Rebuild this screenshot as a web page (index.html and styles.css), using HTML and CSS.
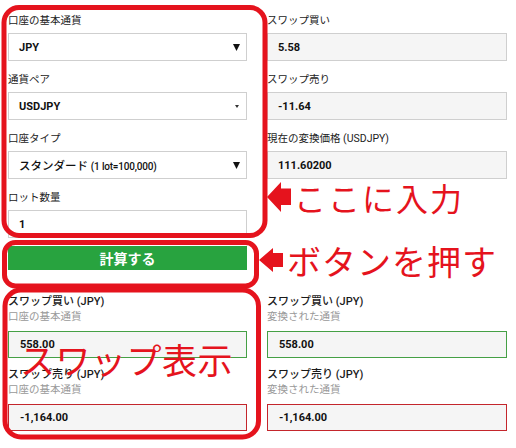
FILE: index.html
```html
<!DOCTYPE html>
<html lang="ja">
<head>
<meta charset="utf-8">
<title>スワップ計算</title>
<link rel="stylesheet" href="styles.css">
</head>
<body>
<div class="page">
  <div class="grid">
    <div class="col">
      <div class="field">
        <div class="label">口座の基本通貨</div>
        <div class="box select"><span>JPY</span><svg class="caret" width="7" height="7" viewBox="0 0 7 7"><polygon points="0,0 7,0 3.5,7" fill="#111"/></svg></div>
      </div>
      <div class="field">
        <div class="label">通貨ペア</div>
        <div class="box select"><span>USDJPY</span><svg class="caret small" width="4" height="3" viewBox="0 0 4 3"><polygon points="0,0 4,0 2,3" fill="#333"/></svg></div>
      </div>
      <div class="field">
        <div class="label">口座タイプ</div>
        <div class="box select"><span class="opt">スタンダード <span class="lat">(1 lot=100,000)</span></span><svg class="caret" width="7" height="7" viewBox="0 0 7 7"><polygon points="0,0 7,0 3.5,7" fill="#111"/></svg></div>
      </div>
      <div class="field last">
        <div class="label">ロット数量</div>
        <div class="box">1</div>
      </div>
      <div class="btn">計算する</div>
    </div>
    <div class="col">
      <div class="field">
        <div class="label">スワップ買い</div>
        <div class="box ro">5.58</div>
      </div>
      <div class="field">
        <div class="label">スワップ売り</div>
        <div class="box ro">-11.64</div>
      </div>
      <div class="field">
        <div class="label">現在の変換価格 (USDJPY)</div>
        <div class="box ro">111.60200</div>
      </div>
    </div>
  </div>

  <div class="grid results">
    <div class="col">
      <div class="rfield">
        <div class="rlabel">スワップ買い (JPY)</div>
        <div class="sub">口座の基本通貨</div>
        <div class="box ro res green">558.00</div>
      </div>
      <div class="rfield">
        <div class="rlabel">スワップ売り (JPY)</div>
        <div class="sub">口座の基本通貨</div>
        <div class="box ro res red">-1,164.00</div>
      </div>
    </div>
    <div class="col">
      <div class="rfield">
        <div class="rlabel">スワップ買い (JPY)</div>
        <div class="sub">変換された通貨</div>
        <div class="box ro res green">558.00</div>
      </div>
      <div class="rfield">
        <div class="rlabel">スワップ売り (JPY)</div>
        <div class="sub">変換された通貨</div>
        <div class="box ro res red">-1,164.00</div>
      </div>
    </div>
  </div>

  <svg class="overlay" width="516" height="448" viewBox="0 0 516 448">
    <g fill="none" stroke="#e5131d" stroke-width="5">
      <rect x="4" y="7.5" width="261" height="228" rx="15"/>
      <rect x="4.5" y="242.5" width="252" height="43.5" rx="11"/>
      <rect x="5" y="290" width="253.5" height="147" rx="16"/>
    </g>
    <g fill="#e5131d">
      <polygon points="267,197 281,182 281,188.5 291,188.5 291,205 281,205 281,212"/>
      <polygon points="259,260 273,248 273,253 283,253 283,267 273,267 273,272"/>
    </g>
  </svg>
  <div class="note n1">ここに入力</div>
  <div class="note n2">ボタンを押す</div>
  <div class="note n3">スワップ表示</div>
</div>
</body>
</html>
```

FILE: styles.css
```css
* { box-sizing: border-box; }
html, body { margin: 0; padding: 0; background: #fff; }
body {
  font-family: Roboto, "Noto Sans CJK JP", sans-serif;
  color: #222;
}
.page {
  position: relative;
  width: 516px;
  height: 448px;
  padding: 14px 9px 0 8px;
  overflow: hidden;
}
.grid {
  display: grid;
  grid-template-columns: 239px 240px;
  column-gap: 20px;
}
.col { display: flex; flex-direction: column; }
.field { margin-bottom: 12px; }
.field.last { margin-bottom: 8px; }
.label {
  font-size: 10.5px;
  line-height: 14px;
  height: 14px;
  margin-bottom: 5px;
  color: #222;
  white-space: nowrap;
}
.box {
  height: 28px;
  border: 1px solid #cfcfcf;
  background: #fff;
  padding: 0 10px;
  display: flex;
  align-items: center;
  font-size: 11px;
  font-weight: 700;
  color: #111;
  white-space: nowrap;
}
.select { justify-content: space-between; padding-right: 6px; }
.caret.small { margin-right: 1px; }
.opt { font-weight: 500; font-size: 11.5px; }
.opt .lat { font-size: 10px; letter-spacing: -0.2px; }
.ro { background: #f5f5f5; }
.btn {
  height: 24px;
  background: #28a33f;
  color: #fff;
  font-weight: 700;
  font-size: 14px;
  display: flex;
  align-items: center;
  justify-content: center;
}
.results { margin-top: 25px; }
.rfield { margin-bottom: 10px; }
.rlabel {
  font-size: 11px;
  line-height: 14px;
  height: 14px;
  color: #1a1a1a;
  font-weight: 500;
  white-space: nowrap;
}
.sub {
  font-size: 10.5px;
  line-height: 14px;
  height: 14px;
  margin: 1px 0 7px;
  color: #999;
  white-space: nowrap;
}
.res { height: 27px; padding-left: 11px; }
.green { border-color: #45a045; }
.red { border-color: #c4262c; }

.overlay {
  position: absolute;
  left: 0;
  top: 0;
  pointer-events: none;
}
.note {
  position: absolute;
  font-family: "Noto Sans CJK JP", sans-serif;
  color: #e5131d;
  line-height: 1;
  white-space: nowrap;
}
.n1 { left: 294px; top: 181px; font-size: 32px; letter-spacing: 2px; }
.n2 { left: 287px; top: 244px; font-size: 34px; letter-spacing: 1px; }
.n3 { left: 20px; top: 341px; font-size: 35px; letter-spacing: 0.5px; }
```
